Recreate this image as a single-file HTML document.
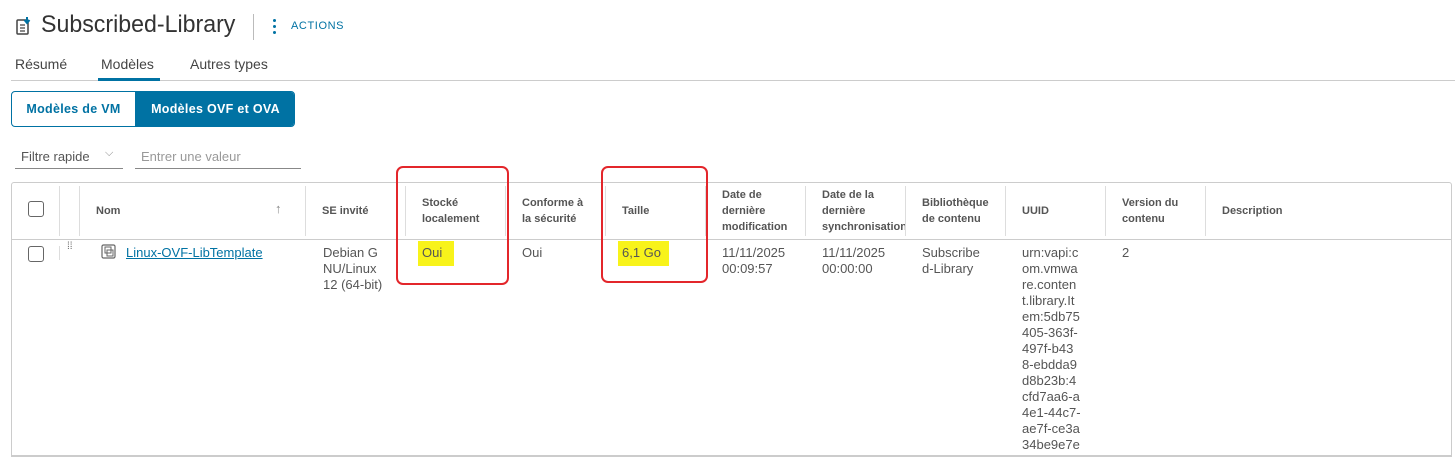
<!DOCTYPE html>
<html><head><meta charset="utf-8"><style>
*{margin:0;padding:0;box-sizing:border-box}
body{width:1455px;height:462px;background:#fff;font-family:"Liberation Sans",sans-serif;color:#333;position:relative;overflow:hidden}
.a{position:absolute;white-space:nowrap}
.h{position:absolute;font-size:11px;font-weight:bold;color:#555;line-height:16px}
.c{position:absolute;font-size:13px;color:#555;line-height:16px}
.sep{position:absolute;top:186px;height:50px;width:1px;background:#ddd}
.cb{position:absolute;width:16px;height:16px;border:1px solid #666;border-radius:3px;background:#fff}
.red{position:absolute;border:2px solid #e3262b;border-radius:7px}
.hl{position:absolute;background:#f8f31a;font-size:13px;color:#555;line-height:16px;padding:4px 4px}
</style></head><body>
<svg class="a" style="left:16px;top:17px" width="16" height="18" viewBox="0 0 16 18"><rect x="1" y="3" width="11" height="14" rx="1" fill="none" stroke="#444" stroke-width="1.5"/><path d="M4 8h5M4 11h5M4 14h5" stroke="#444" stroke-width="1.3"/><path d="M11 0v5M8.5 3l2.5 3 2.5-3" stroke="#0072a3" stroke-width="2" fill="#0072a3"/></svg>
<div class="a" style="left:41px;top:11px;font-size:24px;color:#333;transform:scaleX(0.965);transform-origin:left">Subscribed-Library</div>
<div class="a" style="left:253px;top:14px;width:1px;height:26px;background:#bbb"></div>
<div class="a" style="left:273px;top:19px;width:3px;height:3px;border-radius:2px;background:#0072a3;box-shadow:0 6px #0072a3,0 12px #0072a3"></div>
<div class="a" style="left:291px;top:20px;font-size:11px;color:#0072a3;letter-spacing:.6px">ACTIONS</div>
<div class="a" style="left:15px;top:56px;font-size:14px;color:#444">Résumé</div>
<div class="a" style="left:101px;top:56px;font-size:14px;color:#444">Modèles</div>
<div class="a" style="left:190px;top:56px;font-size:14px;color:#444">Autres types</div>
<div class="a" style="left:11px;top:80px;width:1444px;height:1px;background:#ccc"></div>
<div class="a" style="left:98px;top:78px;width:62px;height:3px;background:#0072a3"></div>
<div class="a" style="left:11px;top:91px;width:284px;height:36px;border:1px solid #0072a3;border-radius:4px;overflow:hidden">
<div class="a" style="left:0;top:0;width:123px;height:34px;line-height:34px;text-align:center;font-size:12.5px;font-weight:bold;color:#0072a3;letter-spacing:.3px">Modèles de VM</div>
<div class="a" style="left:123px;top:0;width:161px;height:34px;line-height:34px;text-align:center;font-size:12.5px;font-weight:bold;color:#fff;background:#0072a3;letter-spacing:.3px">Modèles OVF et OVA</div></div>
<div class="a" style="left:21px;top:149px;font-size:13px;color:#555">Filtre rapide</div>
<div class="a" style="left:105px;top:147px;font-size:11px;color:#888">⌵</div>
<div class="a" style="left:15px;top:168px;width:108px;height:1px;background:#888"></div>
<div class="a" style="left:141px;top:149px;font-size:13px;color:#999">Entrer une valeur</div>
<div class="a" style="left:135px;top:168px;width:166px;height:1px;background:#888"></div>

<div class="a" style="left:11px;top:182px;width:1441px;height:275px;border:1px solid #ccc;border-bottom:2px solid #ccc;border-radius:3px 3px 0 0"></div>
<div class="a" style="left:12px;top:239px;width:1439px;height:1px;background:#ccc"></div>
<div class="sep" style="left:59px"></div><div class="sep" style="left:79px"></div><div class="sep" style="left:305px"></div><div class="sep" style="left:405px"></div><div class="sep" style="left:505px"></div><div class="sep" style="left:605px"></div><div class="sep" style="left:705px"></div><div class="sep" style="left:805px"></div><div class="sep" style="left:905px"></div><div class="sep" style="left:1005px"></div><div class="sep" style="left:1105px"></div><div class="sep" style="left:1205px"></div>
<div class="a" style="left:59px;top:246px;width:1px;height:14px;background:#ddd"></div>
<div class="cb" style="left:28px;top:201px"></div>
<div class="h" style="left:96px;top:203px">Nom</div>
<div class="a" style="left:275px;top:201px;font-size:13px;color:#888">↑</div>
<div class="h" style="left:322px;top:203px">SE invité</div>
<div class="h" style="left:422px;top:195px">Stocké<br>localement</div>
<div class="h" style="left:522px;top:195px">Conforme à<br>la sécurité</div>
<div class="h" style="left:622px;top:203px">Taille</div>
<div class="h" style="left:722px;top:187px">Date de<br>dernière<br>modification</div>
<div class="h" style="left:822px;top:187px;width:83px;overflow:hidden">Date de la<br>dernière<br>synchronisation</div>
<div class="h" style="left:922px;top:195px">Bibliothèque<br>de contenu</div>
<div class="h" style="left:1022px;top:203px">UUID</div>
<div class="h" style="left:1122px;top:195px">Version du<br>contenu</div>
<div class="h" style="left:1222px;top:203px">Description</div>

<div class="cb" style="left:28px;top:246px"></div>
<div class="a" style="left:67px;top:244px;font-size:10px;color:#666;line-height:5px">⁞⁞</div>
<svg class="a" style="left:101px;top:244px" width="16" height="16" viewBox="0 0 16 16"><rect x="1" y="1" width="13" height="13" rx="1.5" fill="none" stroke="#666" stroke-width="1.2"/><rect x="4" y="3" width="6" height="6" fill="none" stroke="#666"/><rect x="6" y="6" width="6" height="6" fill="none" stroke="#666"/></svg>
<div class="c" style="left:126px;top:245px;color:#0072a3;text-decoration:underline">Linux-OVF-LibTemplate</div>
<div class="c" style="left:323px;top:245px">Debian G<br>NU/Linux<br>12 (64-bit)</div>
<div class="hl" style="left:418px;top:241px;height:25px;width:36px">Oui</div>
<div class="c" style="left:522px;top:245px">Oui</div>
<div class="hl" style="left:618px;top:241px;height:25px;width:51px">6,1 Go</div>
<div class="c" style="left:722px;top:245px">11/11/2025<br>00:09:57</div>
<div class="c" style="left:822px;top:245px">11/11/2025<br>00:00:00</div>
<div class="c" style="left:922px;top:245px">Subscribe<br>d-Library</div>
<div class="c" style="left:1022px;top:245px">urn:vapi:c<br>om.vmwa<br>re.conten<br>t.library.It<br>em:5db75<br>405-363f-<br>497f-b43<br>8-ebdda9<br>d8b23b:4<br>cfd7aa6-a<br>4e1-44c7-<br>ae7f-ce3a<br>34be9e7e</div>
<div class="c" style="left:1122px;top:245px">2</div>
<div class="red" style="left:396px;top:166px;width:113px;height:119px"></div>
<div class="red" style="left:601px;top:166px;width:107px;height:117px"></div>
</body></html>
